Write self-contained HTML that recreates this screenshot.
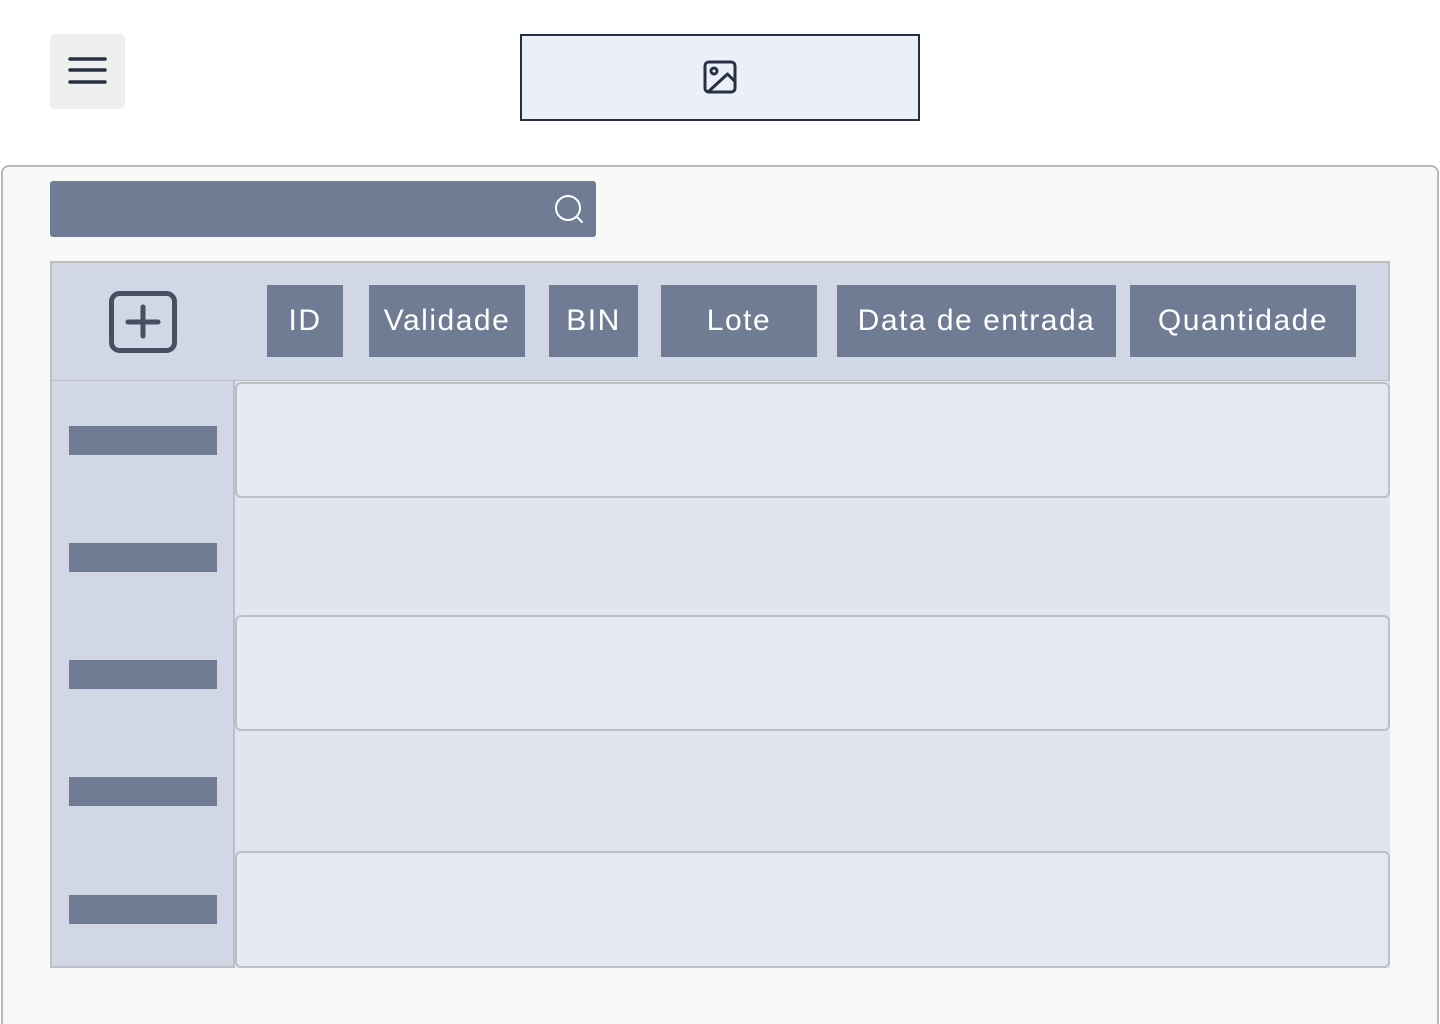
<!DOCTYPE html>
<html style="width:1440px;height:1024px;overflow:hidden"><head><meta charset="utf-8"><style>
*{box-sizing:border-box;margin:0;padding:0}
body{width:1440px;height:1024px;background:#fff;position:relative;overflow:hidden;font-family:"Liberation Sans",sans-serif}
.a{position:absolute}
.btn{position:absolute;top:285px;height:72px;background:#707c94;color:#fff;font-size:30px;letter-spacing:1.5px;display:flex;align-items:center;justify-content:center}
.bar{position:absolute;left:69px;width:148px;height:29px;background:#707c94}
.row{position:absolute;left:235px;width:1155px;height:116px;background:#e6e9f2;border:2px solid #bcbfc6;border-radius:6px}
</style></head><body>
<div class="a" style="left:50px;top:34px;width:75px;height:75px;background:#efefef;border-radius:5px"></div>
<svg class="a" style="left:50px;top:34px" width="75" height="75"><g stroke="#283044" stroke-width="3.5" stroke-linecap="round"><line x1="20" y1="25" x2="55" y2="25"/><line x1="20" y1="36" x2="55" y2="36"/><line x1="20" y1="48" x2="55" y2="48"/></g></svg>
<div class="a" style="left:520px;top:34px;width:400px;height:87px;background:#ebeff8;border:2px solid #283044"></div>
<svg class="a" style="left:702px;top:59px" width="36" height="36" viewBox="0 0 24 24" fill="none" stroke="#283044" stroke-width="2" stroke-linecap="round" stroke-linejoin="round"><rect x="2" y="2" width="20" height="20" rx="2.5"/><circle cx="8" cy="8" r="2"/><path d="M22 15l-5-5L4 22"/></svg>
<div class="a" style="left:1px;top:165px;width:1438px;height:859px;background:#f9f9f9;border:2px solid #b8b8bd;border-bottom:none;border-radius:8px 8px 0 0"></div>
<div class="a" style="left:50px;top:181px;width:546px;height:56px;background:#707c94;border-radius:3px"></div>
<svg class="a" style="left:552px;top:192px" width="34" height="34" viewBox="0 0 34 34" fill="none" stroke="#fff" stroke-width="2"><circle cx="16" cy="16" r="12"/><line x1="24.5" y1="24.5" x2="30" y2="30" stroke-linecap="round"/></svg>
<div class="a" style="left:50px;top:261px;width:1340px;height:122px;background:#d1d7e4;border:2px solid #bcbfc6;border-bottom-width:3px"></div>
<div class="a" style="left:50px;top:381px;width:185px;height:587px;background:#d1d7e4;border:2px solid #bcbfc6;border-top:none"></div>
<div class="a" style="left:235px;top:381px;width:1155px;height:587px;background:#e1e5ef"></div>
<div class="row" style="top:382px"></div>
<div class="row" style="top:615px"></div>
<div class="row" style="top:851px;height:117px"></div>
<div class="bar" style="top:426px"></div><div class="bar" style="top:543px"></div><div class="bar" style="top:660px"></div><div class="bar" style="top:777px"></div><div class="bar" style="top:895px"></div>
<svg class="a" style="left:108px;top:290px" width="72" height="64"><rect x="3.5" y="3.5" width="63" height="57" rx="8" fill="none" stroke="#474f63" stroke-width="5"/><g stroke="#474f63" stroke-width="5" stroke-linecap="round"><line x1="35" y1="17" x2="35" y2="46"/><line x1="20" y1="32" x2="50" y2="32"/></g></svg>
<div class="btn" style="left:267px;width:76px">ID</div>
<div class="btn" style="left:369px;width:156px">Validade</div>
<div class="btn" style="left:549px;width:89px">BIN</div>
<div class="btn" style="left:661px;width:156px">Lote</div>
<div class="btn" style="left:837px;width:279px">Data de entrada</div>
<div class="btn" style="left:1130px;width:226px">Quantidade</div>
</body></html>
